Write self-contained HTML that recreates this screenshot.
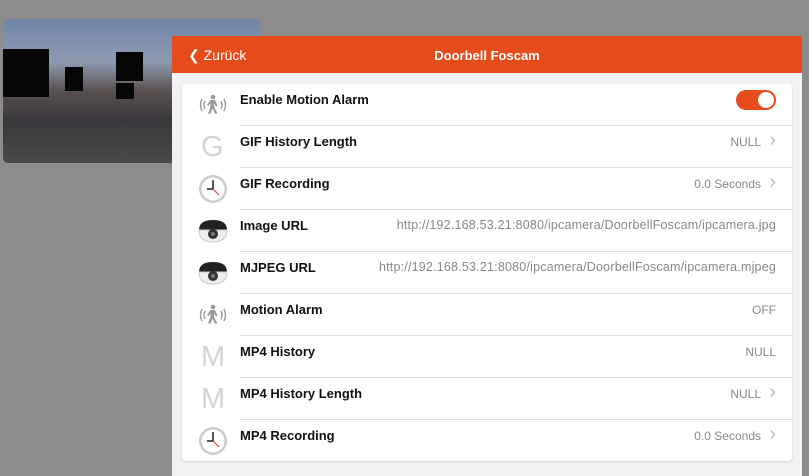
<!DOCTYPE html>
<html><head><meta charset="utf-8"><style>
*{margin:0;padding:0;box-sizing:border-box}
body{width:809px;height:471px;overflow:hidden;background:#8c8c8c;font-family:"Liberation Sans",sans-serif;position:relative}
.cam{position:absolute;left:3px;top:19px;width:256px;height:144px;border-radius:5px;overflow:hidden;
background:linear-gradient(180deg,#6f86a8 0%,#8e9ab0 30%,#5a5050 50%,#3a383c 70%,#4a4a48 100%)}
.cam div{position:absolute;background:#060606}
.modal{position:absolute;left:172px;top:36px;width:630px;height:440px;background:#f2f2f2}
.hdr{height:37px;background:#e54b1b;color:#fff;position:relative}
.hdr .back{position:absolute;left:16px;top:11px;font-size:14px}
.hdr .t{position:absolute;left:0;right:0;top:12px;text-align:center;font-size:13px;font-weight:bold}
.card{position:absolute;left:10px;top:48px;width:610px;height:377px;background:#fff;border-radius:4px;box-shadow:0 1px 2px rgba(0,0,0,.15)}
.row{position:relative;height:42px}
.row+.row:before{content:"";position:absolute;left:58px;right:0;top:-1px;border-top:1px solid #ddd}
.lbl{position:absolute;left:58px;top:8px;font-size:13px;font-weight:bold;color:#111}
.val{position:absolute;right:16px;top:9px;font-size:12px;color:#888}
.val.u{font-size:12.5px;letter-spacing:.2px;top:8px}
.val.ch{right:31px}
.chev{position:absolute;right:16px;top:3px;color:#bbb;font-size:20px}
.ic{position:absolute;left:16px;top:6px;width:30px;height:30px}
.letter{position:absolute;left:19px;top:5px;font-size:29px;color:#d4d4d4}
.tog{position:absolute;right:16px;top:6px;width:40px;height:20px;border-radius:10px;background:#e54b1b}
.tog:after{content:"";position:absolute;right:2px;top:2px;width:16px;height:16px;border-radius:50%;background:#fff}
</style></head><body>
<div class="cam">
<div style="left:0;top:30px;width:46px;height:48px"></div>
<div style="left:62px;top:48px;width:18px;height:24px"></div>
<div style="left:113px;top:33px;width:27px;height:29px"></div>
<div style="left:113px;top:64px;width:18px;height:16px"></div>
</div>
<div class="modal">
<div class="hdr"><span class="back">&#10094; Zurück</span><div class="t">Doorbell Foscam</div></div>
<div class="card">
<div class="row"><svg class="ic" viewBox="0 0 30 30"><g fill="none" stroke="#999" stroke-width="1.4"><path d="M7 11q-2 4 0 8M4 9q-3 6 0 12M23 11q2 4 0 8M26 9q3 6 0 12"/></g><circle cx="15" cy="7" r="2.3" fill="#999"/><path d="M12.5 10h4.5l2.5 5.5-1.5 1-2-3v3.5l3.5 6.5h-2.5l-2.5-5-2 5h-2.5l2.5-6.5v-4l-2 3-1.5-1z" fill="#999"/></svg><span class="lbl">Enable Motion Alarm</span><span class="tog"></span></div>
<div class="row"><span class="letter">G</span><span class="lbl">GIF History Length</span><span class="val ch">NULL</span><span class="chev">›</span></div>
<div class="row"><svg class="ic" viewBox="0 0 30 30"><circle cx="15" cy="15" r="14" fill="#ccc"/><circle cx="15" cy="15" r="11.5" fill="#fff"/><path d="M15 6v9h-6" stroke="#222" stroke-width="1.5" fill="none"/><path d="M15 15l6 6" stroke="#d33" stroke-width="1"/></svg><span class="lbl">GIF Recording</span><span class="val ch">0.0 Seconds</span><span class="chev">›</span></div>
<div class="row"><svg class="ic" viewBox="0 0 30 30"><path d="M1 14q0-10 14-10t14 10z" fill="#222"/><path d="M1 14q0 12 14 12t14-12z" fill="#eee" stroke="#ccc"/><circle cx="15" cy="18" r="5" fill="#333"/><circle cx="15" cy="18" r="2" fill="#777"/></svg><span class="lbl">Image URL</span><span class="val u">http://192.168.53.21:8080/ipcamera/DoorbellFoscam/ipcamera.jpg</span></div>
<div class="row"><svg class="ic" viewBox="0 0 30 30"><path d="M1 14q0-10 14-10t14 10z" fill="#222"/><path d="M1 14q0 12 14 12t14-12z" fill="#eee" stroke="#ccc"/><circle cx="15" cy="18" r="5" fill="#333"/><circle cx="15" cy="18" r="2" fill="#777"/></svg><span class="lbl">MJPEG URL</span><span class="val u">http://192.168.53.21:8080/ipcamera/DoorbellFoscam/ipcamera.mjpeg</span></div>
<div class="row"><svg class="ic" viewBox="0 0 30 30"><g fill="none" stroke="#999" stroke-width="1.4"><path d="M7 11q-2 4 0 8M4 9q-3 6 0 12M23 11q2 4 0 8M26 9q3 6 0 12"/></g><circle cx="15" cy="7" r="2.3" fill="#999"/><path d="M12.5 10h4.5l2.5 5.5-1.5 1-2-3v3.5l3.5 6.5h-2.5l-2.5-5-2 5h-2.5l2.5-6.5v-4l-2 3-1.5-1z" fill="#999"/></svg><span class="lbl">Motion Alarm</span><span class="val">OFF</span></div>
<div class="row"><span class="letter">M</span><span class="lbl">MP4 History</span><span class="val">NULL</span></div>
<div class="row"><span class="letter">M</span><span class="lbl">MP4 History Length</span><span class="val ch">NULL</span><span class="chev">›</span></div>
<div class="row"><svg class="ic" viewBox="0 0 30 30"><circle cx="15" cy="15" r="14" fill="#ccc"/><circle cx="15" cy="15" r="11.5" fill="#fff"/><path d="M15 6v9h-6" stroke="#222" stroke-width="1.5" fill="none"/><path d="M15 15l6 6" stroke="#d33" stroke-width="1"/></svg><span class="lbl">MP4 Recording</span><span class="val ch">0.0 Seconds</span><span class="chev">›</span></div>
</div></div>
</body></html>
